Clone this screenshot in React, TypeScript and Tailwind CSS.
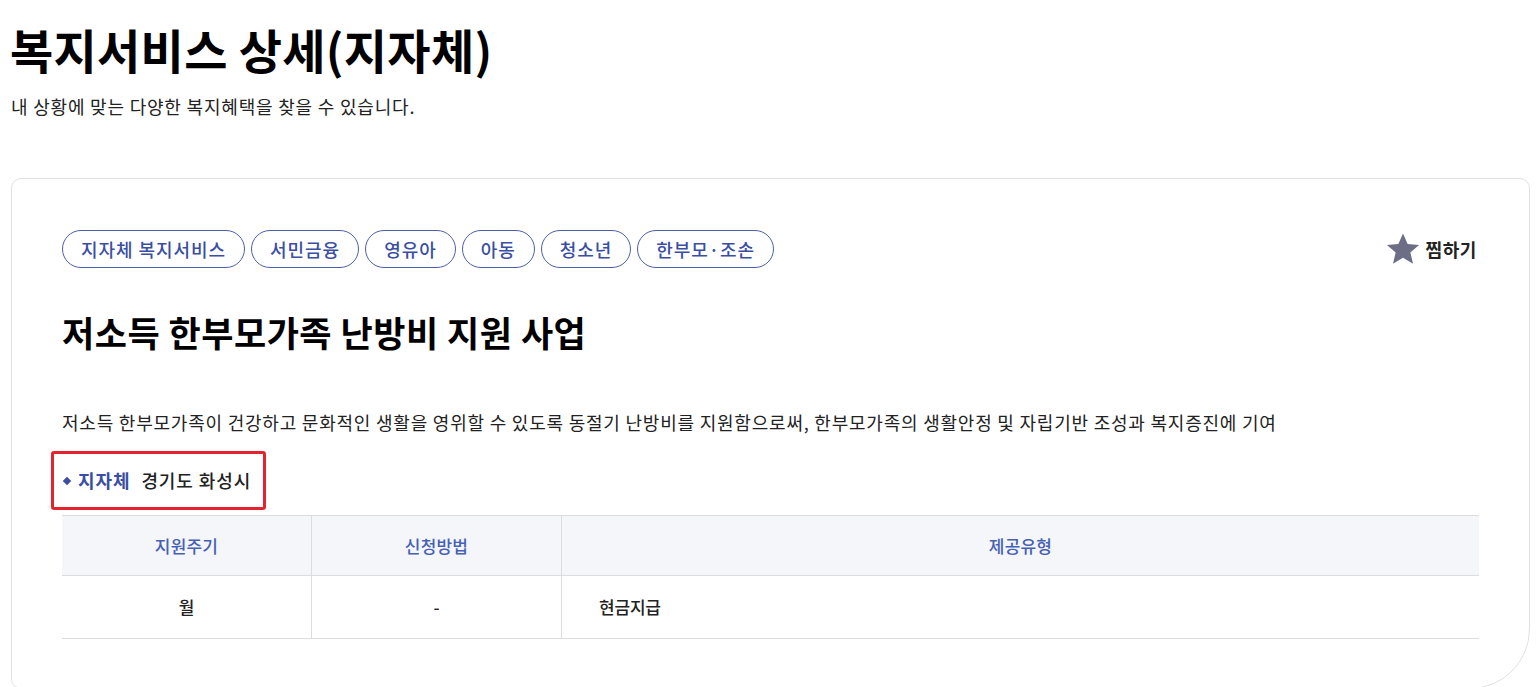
import React from 'react';

const font = { fontFamily: '"Noto Sans CJK KR", "Noto Sans", sans-serif' };

const tags = ['지자체 복지서비스', '서민금융', '영유아', '아동', '청소년', '한부모·조손'];

const App: React.FC = () => {
  return (
    <div className="min-h-screen bg-white pl-[11px] pr-[8px] text-[#111]" style={font}>
      <div className="pt-[17px]">
        <h1 className="-ml-[1px] text-[47px] font-bold leading-[64px] tracking-[0.3px] text-black">
          복지서비스 상세(지자체)
        </h1>
        <p className="mt-[12px] text-[18px] leading-[26px] tracking-[0.8px] text-[#222]">
          내 상황에 맞는 다양한 복지혜택을 찾을 수 있습니다.
        </p>
      </div>

      <div className="mt-[59px] rounded-t-[10px] rounded-bl-[10px] rounded-br-[60px] border border-[#e2e2e2] px-[50px] pb-[49px] pt-[51px]">
        <div className="flex items-center justify-between">
          <div className="flex gap-[6px]">
            {tags.map((t) => (
              <span
                key={t}
                className="flex h-[38px] items-center rounded-full border border-[#4d5fa8] px-[18px] text-[18px] font-medium tracking-[0.95px] text-[#3a4ea3]"
              >
                {t}
              </span>
            ))}
          </div>
          <button className="mr-[2px] flex items-center gap-[5px] text-[18px] font-bold tracking-[0.6px] text-[#222]">
            <svg width="36" height="36" viewBox="0 0 24 24" fill="#6b6e85">
              <path d="M12 1.6l3.1 7.1 7.6.6-5.8 5 1.8 7.5L12 17.8l-6.7 4 1.8-7.5-5.8-5 7.6-.6z" />
            </svg>
            찜하기
          </button>
        </div>

        <h2 className="mt-[40px] text-[35px] font-bold leading-[48px] tracking-[0.5px] text-black">
          저소득 한부모가족 난방비 지원 사업
        </h2>

        <p className="mt-[53px] text-[18px] leading-[26px] tracking-[0.78px] text-[#222]">
          저소득 한부모가족이 건강하고 문화적인 생활을 영위할 수 있도록 동절기 난방비를 지원함으로써, 한부모가족의 생활안정 및 자립기반 조성과 복지증진에 기여
        </p>

        <div className="-ml-[11px] mt-[16px] flex w-fit items-center rounded-[3px] border-[3px] border-[#e3242e] py-[13px] pl-[10px] pr-[12px]">
          <span className="mr-[8px] h-[6px] w-[6px] rotate-45 bg-[#3a4ea3]" />
          <span className="text-[18px] font-bold tracking-[0.9px] text-[#3a4ea3]">지자체</span>
          <span className="ml-[11px] text-[18px] font-medium tracking-[0.9px] text-[#222]">경기도 화성시</span>
        </div>

        <div className="mt-[5px] border-t border-[#dcdde0]">
          <div className="grid grid-cols-[250px_250px_1fr] bg-[#f4f6fa] text-[17px] font-medium tracking-[0.2px] text-[#4660b5]">
            <div className="flex h-[59px] items-center justify-center border-r border-[#dcdde0]">지원주기</div>
            <div className="flex h-[59px] items-center justify-center border-r border-[#dcdde0]">신청방법</div>
            <div className="flex h-[59px] items-center justify-center">제공유형</div>
          </div>
          <div className="grid grid-cols-[250px_250px_1fr] border-y border-[#dcdde0] text-[17px] font-medium tracking-[-0.2px] text-[#222]">
            <div className="flex h-[62px] items-center justify-center border-r border-[#dcdde0]">월</div>
            <div className="flex h-[62px] items-center justify-center border-r border-[#dcdde0]">-</div>
            <div className="flex h-[62px] items-center pl-[37px]">현금지급</div>
          </div>
        </div>
      </div>
    </div>
  );
};

export default App;
